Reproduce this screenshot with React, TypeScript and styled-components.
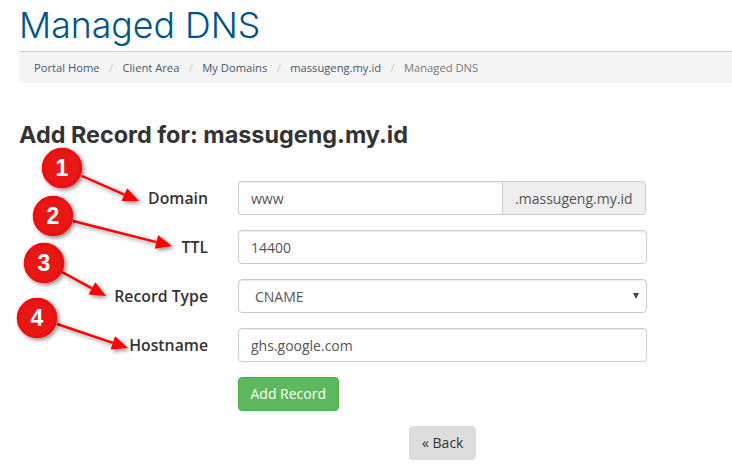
import styled, { createGlobalStyle } from "styled-components";

const GlobalStyle = createGlobalStyle`
  html, body {
    margin: 0;
    padding: 0;
    background: #fff;
    overflow: hidden;
  }
  * {
    box-sizing: border-box;
  }
`;

const crumbs = ["Portal Home", "Client Area", "My Domains", "massugeng.my.id"];

const badges = [
  { n: "1", cx: 62, cy: 168, tx: 139, ty: 201, bx: 82, by: 176 },
  { n: "2", cx: 53, cy: 216, tx: 172, ty: 246, bx: 73, by: 221 },
  { n: "3", cx: 44, cy: 263, tx: 106, ty: 296, bx: 62, by: 272 },
  { n: "4", cx: 37, cy: 318, tx: 128, ty: 348, bx: 57, by: 324 },
];

const App = () => {
  return (
    <Page>
      <GlobalStyle />
      <Title>Managed DNS</Title>
      <Breadcrumb>
        {crumbs.map((c) => (
          <Crumb key={c}>
            <a>{c}</a>
            <Slash>/</Slash>
          </Crumb>
        ))}
        <Current>Managed DNS</Current>
      </Breadcrumb>
      <Heading>Add Record for: massugeng.my.id</Heading>
      <Form>
        <Row>
          <Label>Domain</Label>
          <InputGroup>
            <GroupInput value="www" readOnly />
            <Addon>.massugeng.my.id</Addon>
          </InputGroup>
        </Row>
        <Row>
          <Label>TTL</Label>
          <Input value="14400" readOnly />
        </Row>
        <Row>
          <Label>Record Type</Label>
          <SelectBox>
            <span>CNAME</span>
            <Caret />
          </SelectBox>
        </Row>
        <Row>
          <Label>Hostname</Label>
          <Input value="ghs.google.com" readOnly />
        </Row>
        <Row>
          <Label />
          <AddButton>Add Record</AddButton>
        </Row>
      </Form>
      <BackRow>
        <BackButton>« Back</BackButton>
      </BackRow>
      <Annotations width={732} height={475} viewBox="0 0 732 475">
        <defs>
          <filter id="sh" x="-30%" y="-30%" width="170%" height="170%">
            <feDropShadow dx="2" dy="2" stdDeviation="2.2" floodColor="#000" floodOpacity="0.45" />
          </filter>
          <radialGradient id="ball" cx="50%" cy="50%" r="50%">
            <stop offset="0%" stopColor="#e81c1c" />
            <stop offset="80%" stopColor="#ea1515" />
            <stop offset="100%" stopColor="#d81010" />
          </radialGradient>
        </defs>
        {badges.map((b) => {
          const dx = b.tx - b.bx;
          const dy = b.ty - b.by;
          const len = Math.sqrt(dx * dx + dy * dy);
          const ux = dx / len;
          const uy = dy / len;
          const hx = b.tx - ux * 16;
          const hy = b.ty - uy * 16;
          const w = 7;
          const head = `${b.tx},${b.ty} ${hx - uy * w},${hy + ux * w} ${hx + uy * w},${hy - ux * w}`;
          return (
            <g key={b.n}>
              <g filter="url(#sh)">
                <line x1={b.bx} y1={b.by} x2={hx} y2={hy} stroke="#f00" strokeWidth="2.4" />
                <polygon points={head} fill="#f00" />
              </g>
              <g filter="url(#sh)">
                <circle cx={b.cx} cy={b.cy} r="19.5" fill="url(#ball)" stroke="#f80808" strokeWidth="1.5" />
              </g>
              <BadgeText x={b.cx} y={b.cy + 8}>
                {b.n}
              </BadgeText>
            </g>
          );
        })}
      </Annotations>
    </Page>
  );
};

const Page = styled.div`
  position: relative;
  width: 732px;
  height: 475px;
  overflow: hidden;
  padding-left: 19px;
  font-family: "Open Sans", sans-serif;
  font-size: 14px;
  color: #333;
`;

const Title = styled.h1`
  margin: 0;
  height: 51px;
  padding-top: 3px;
  font-family: Inter, sans-serif;
  font-size: 35.7px;
  line-height: 44px;
  font-weight: 300;
  color: #058;
  white-space: nowrap;
`;

const Breadcrumb = styled.div`
  display: flex;
  align-items: center;
  width: 760px;
  height: 32px;
  padding: 0 15px;
  background: #f5f5f5;
  border-top: 1px solid #ccc;
  border-radius: 0 0 4px 4px;
  font-size: 11.2px;
  color: #777;
  white-space: nowrap;
`;

const Crumb = styled.span`
  color: #44586c;
`;

const Slash = styled.span`
  display: inline-block;
  padding: 0 9.4px;
  color: #ccc;
`;

const Current = styled.span`
  color: #777;
`;

const Heading = styled.h2`
  margin: 38px 0 0;
  height: 59px;
  font-family: Inter, sans-serif;
  font-size: 23.4px;
  line-height: 28px;
  font-weight: 700;
  color: #333;
  white-space: nowrap;
`;

const Form = styled.div`
  display: flex;
  flex-direction: column;
  gap: 15px;
  margin-top: 1px;
`;

const Row = styled.div`
  display: flex;
  align-items: center;
  gap: 30px;
  width: 628px;
`;

const Label = styled.label`
  flex: 0 0 189px;
  text-align: right;
  font-size: 15.8px;
  font-weight: 600;
  color: #333;
`;

const Input = styled.input`
  flex: 1;
  min-width: 0;
  height: 34px;
  padding: 0 12px;
  border: 1px solid #ccc;
  border-radius: 4px;
  background: #fff;
  box-shadow: inset 0 1px 1px rgba(0, 0, 0, 0.075);
  font-family: inherit;
  font-size: 14px;
  color: #555;
  outline: none;
`;

const InputGroup = styled.div`
  flex: 1;
  display: flex;
  height: 34px;
  margin-right: 1px;
`;

const GroupInput = styled(Input)`
  border-right: 0;
  border-radius: 4px 0 0 4px;
`;

const Addon = styled.span`
  display: flex;
  align-items: center;
  padding: 0 12.5px;
  border: 1px solid #ccc;
  border-radius: 0 4px 4px 0;
  background: #eee;
  font-size: 14px;
  color: #555;
`;

const SelectBox = styled.div`
  position: relative;
  flex: 1;
  display: flex;
  align-items: center;
  height: 34px;
  padding: 0 16px;
  border: 1px solid #ccc;
  border-radius: 4px;
  box-shadow: inset 0 1px 1px rgba(0, 0, 0, 0.075);
  color: #555;
`;

const Caret = styled.i`
  position: absolute;
  right: 7px;
  top: 13px;
  border-left: 3px solid transparent;
  border-right: 3px solid transparent;
  border-top: 6px solid #444;
`;

const AddButton = styled.button`
  height: 34px;
  padding: 0 11.5px 2px;
  border: 1px solid #4cae4c;
  border-radius: 4px;
  background: #5cb85c;
  font-family: inherit;
  font-size: 14px;
  color: #fff;
`;

const BackRow = styled.div`
  display: flex;
  margin-top: 15px;
  padding-left: 390px;
`;

const BackButton = styled.button`
  height: 34px;
  padding: 0 12px 2px;
  border: 1px solid #ddd;
  border-radius: 4px;
  background: #ddd;
  font-family: inherit;
  font-size: 14px;
  color: #333;
`;

const Annotations = styled.svg`
  position: absolute;
  left: 0;
  top: 0;
  pointer-events: none;
`;

const BadgeText = styled.text`
  font-family: "Liberation Sans", sans-serif;
  font-size: 23px;
  font-weight: 700;
  fill: #fff;
  text-anchor: middle;
`;

export default App;
